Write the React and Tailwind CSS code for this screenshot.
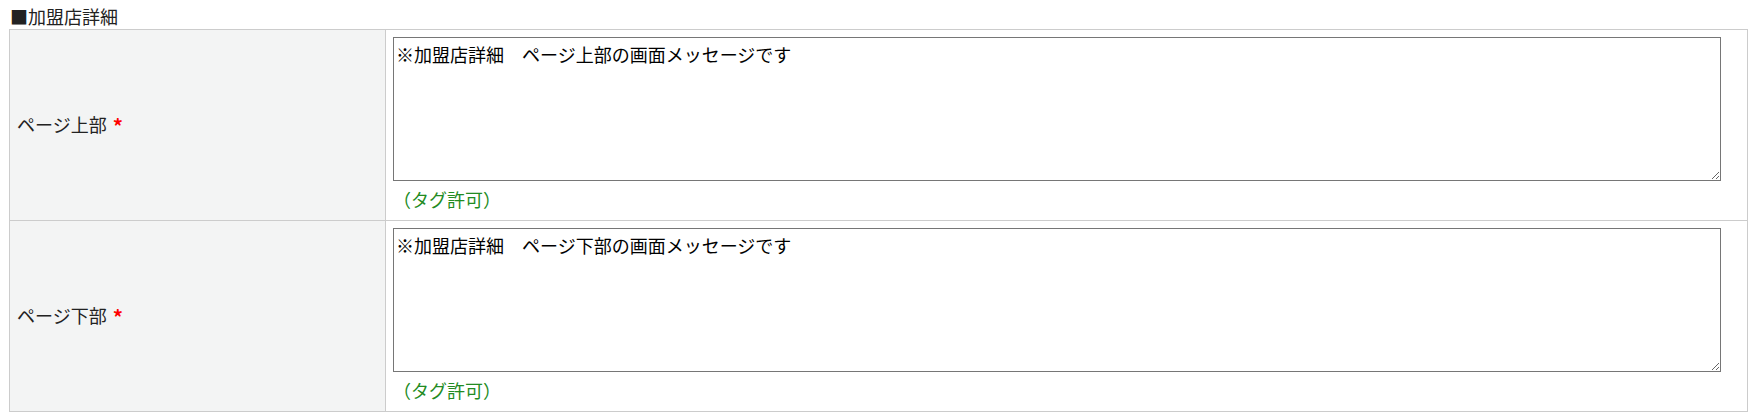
import React from "react";

const rows = [
  { label: "ページ上部", value: "※加盟店詳細　ページ上部の画面メッセージです" },
  { label: "ページ下部", value: "※加盟店詳細　ページ下部の画面メッセージです" }
];

const App = () => {
  return (
    <div
      className="bg-white pl-[9px] pr-[11px] pt-[3px] text-[18px] leading-[26px] text-[#222]"
      style={{ fontFamily: '"Noto Sans CJK JP", "Noto Sans", sans-serif' }}
    >
      <div className="pl-[1px]">■加盟店詳細</div>
      <table className="w-full border-collapse border border-[#cccccc]">
        <tbody>
          {rows.map((row) => (
            <tr key={row.label}>
              <th className="w-[376px] border border-[#cccccc] bg-[#f3f4f4] px-[7px] text-left align-middle font-normal">
                {row.label}
                <span className="ml-[6px] align-[-2px] text-[20px] font-bold text-[#ff0000]">*</span>
              </th>
              <td className="border border-[#cccccc] px-[7px] pt-[7px] pb-[8px] align-top">
                <textarea
                  defaultValue={row.value}
                  className="block h-[144px] w-[1328px] resize border border-[#767676] bg-white px-[2px] pt-[3px] text-[18px] leading-[26px] text-black outline-none"
                />
                <div className="mt-[5px] text-[#228b22]">（タグ許可）</div>
              </td>
            </tr>
          ))}
        </tbody>
      </table>
    </div>
  );
};

export default App;
